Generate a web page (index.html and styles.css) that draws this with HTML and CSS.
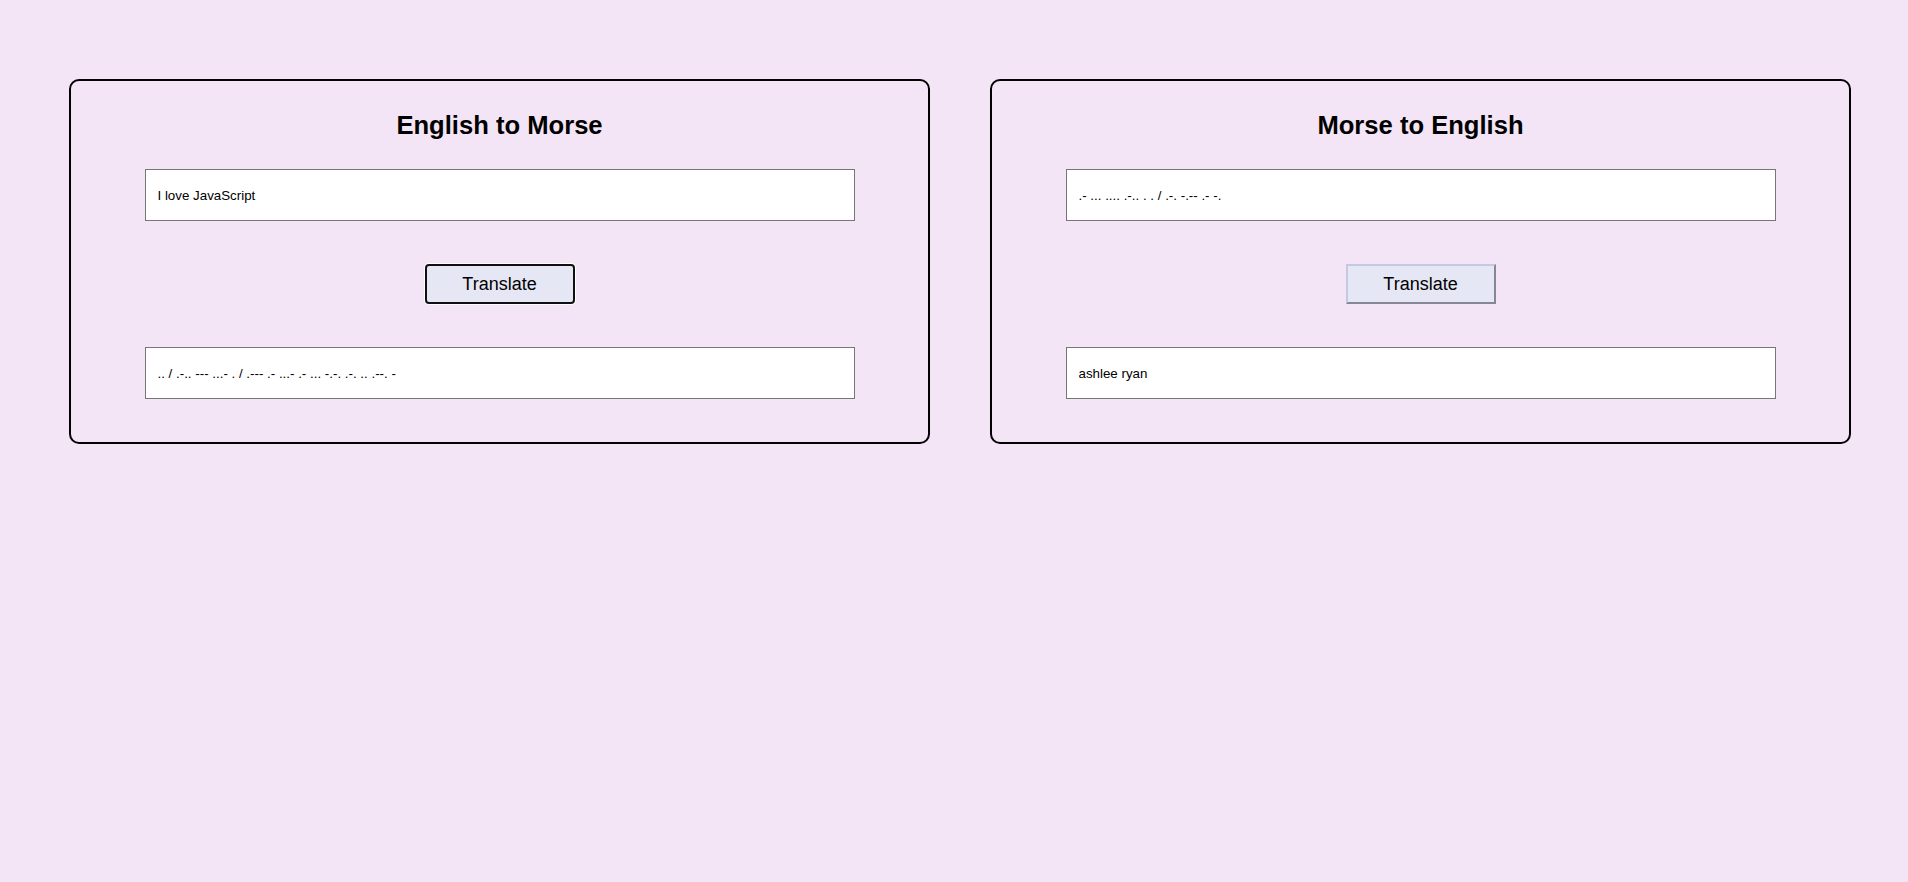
FILE: index.html
```html
<!DOCTYPE html>
<html lang="en">
<head>
<meta charset="utf-8">
<title>Morse Translator</title>
<link rel="stylesheet" href="styles.css">
</head>
<body>
<main class="page">
  <section class="card">
    <h2 class="card-title">English to Morse</h2>
    <input class="field" type="text" value="I love JavaScript">
    <button class="btn btn-focused" type="button">Translate</button>
    <input class="field" type="text" value=".. / .-.. --- ...- . / .--- .- ...- .- ... -.-. .-. .. .--. -">
  </section>
  <section class="card">
    <h2 class="card-title">Morse to English</h2>
    <input class="field" type="text" value=".- ... .... .-.. . . / .-. -.-- .- -.">
    <button class="btn" type="button">Translate</button>
    <input class="field" type="text" value="ashlee ryan">
  </section>
</main>
</body>
</html>
```

FILE: styles.css
```css
html, body {
  margin: 0;
  padding: 0;
}

body {
  background: #f3e5f5;
  font-family: "Liberation Sans", Arial, sans-serif;
  color: #000;
  min-height: 882px;
}

.page {
  display: flex;
  gap: 60px;
  padding: 79px 57px 0 69px;
}

.card {
  flex: 1;
  box-sizing: border-box;
  border: 2px solid #000;
  border-radius: 10px;
  padding: 29px 0 43px;
  display: flex;
  flex-direction: column;
  align-items: center;
}

.card-title {
  margin: 0 0 29px;
  font-size: 25.6px;
  line-height: 30px;
  font-weight: bold;
  text-align: center;
}

.field {
  box-sizing: border-box;
  width: 710px;
  height: 52px;
  margin: 0;
  padding: 0 12px;
  border: 1px solid #767676;
  border-radius: 0;
  background: #fff;
  font-family: "Liberation Sans", Arial, sans-serif;
  font-size: 13.333px;
  color: #000;
  outline: none;
}

.btn {
  box-sizing: border-box;
  width: 150px;
  height: 40px;
  margin: 43px 0;
  padding: 0;
  background: #e6e7f5;
  border-style: solid;
  border-width: 2px;
  border-color: #c4c8e4 #868696 #868696 #c4c8e4;
  border-radius: 0;
  font-family: "Liberation Sans", Arial, sans-serif;
  font-size: 18px;
  color: #000;
  cursor: pointer;
}

.btn-focused {
  border: 2px solid #101010;
  border-radius: 4px;
  box-shadow: 0 0 0 1px #fff;
}
```
